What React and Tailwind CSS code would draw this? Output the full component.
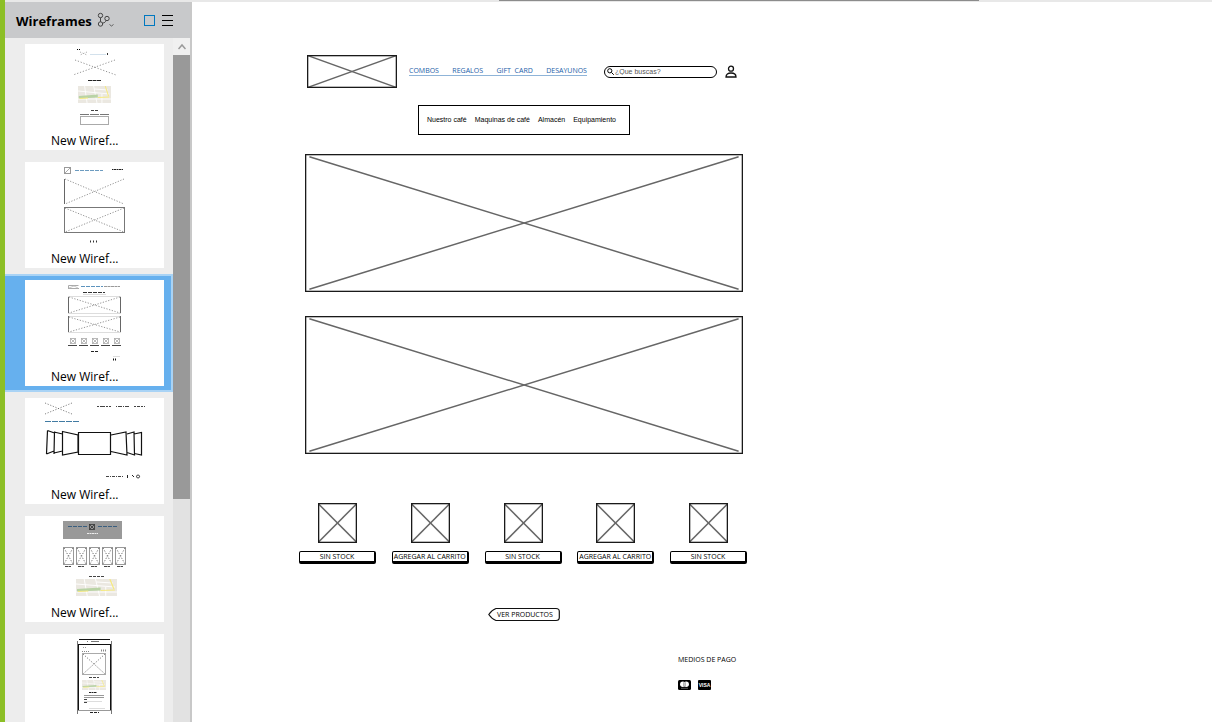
import React from "react";

function Cross({ x, y, w, h, dashed, frame, stroke = "#777" }) {
  return (
    <g stroke={stroke} strokeWidth="0.8" fill="none">
      {frame && <rect x={x} y={y} width={w} height={h} />}
      <path
        d={`M${x} ${y}L${x + w} ${y + h}M${x + w} ${y}L${x} ${y + h}`}
        strokeDasharray={dashed ? "1.2 1.6" : undefined}
      />
    </g>
  );
}

function Dash({ x, y, w, color = "#444", pattern = "3 1", size = 1 }) {
  return <path d={`M${x} ${y + 0.5}h${w}`} stroke={color} strokeWidth={size} strokeDasharray={pattern} fill="none" />;
}

function MiniMap({ x, y, w, h }) {
  return (
    <svg x={x} y={y} width={w} height={h} viewBox="0 0 40 17" preserveAspectRatio="none">
      <rect width="40" height="17" fill="#ebe8e1" />
      <path d="M8 0l3 17M19 0l4 17M29 8v9M0 5l38 3M20 3l16 1M0 13h40" stroke="#fff" strokeWidth="0.9" fill="none" />
      <path d="M1 10l23-1.500v3L1 12.500z" fill="#b9d3a5" />
      <path d="M2 12.500l10-.5M24 11.500l14-.5M33 0l4 10" stroke="#f6ea80" strokeWidth="1.2" fill="none" />
    </svg>
  );
}

function ThumbHome() {
  return (
    <>
      <Dash x={52} y={5} w={3} color="#000" pattern="1 1" />
      <Cross x={55} y={8} w={7} h={3} dashed stroke="#999" />
      <Dash x={65} y={10} w={16} color="#d3e1ec" pattern="20 0" />
      <path d="M82.500 9v2" stroke="#333" />
      <path d="M50 16l41 15M90 16L48 31" stroke="#888" strokeWidth="0.9" strokeDasharray="1.200 1.800" />
      <Dash x={63} y={36} w={13} color="#222" pattern="4 .5" />
      <MiniMap x={53} y={42} w={33} h={17} />
      <Dash x={66} y={66} w={7} />
      <Dash x={55} y={70} w={29} color="#777" pattern="9 1" />
      <rect x="55.500" y="72.500" width="28" height="8" fill="none" stroke="#aaa" />
    </>
  );
}

function ThumbBanners() {
  return (
    <>
      <rect x="39.500" y="5.500" width="6" height="6" fill="none" stroke="#999" />
      <path d="M40 11l5-5" stroke="#aaa" />
      <Dash x={50} y={8} w={28} color="#6d9cc0" pattern="4 1" />
      <Dash x={87} y={7} w={11} color="#222" pattern="1 .5 3 .5" />
      <path d="M39.500 17v25" stroke="#666" />
      <Cross x={40} y={17} w={59} h={25} dashed />
      <rect x="39.500" y="45.500" width="60" height="25" fill="none" stroke="#777" />
      <Cross x={40} y={46} w={59} h={24} dashed />
      <Dash x={65} y={79} w={9} color="#333" pattern="1 2" size={2} />
    </>
  );
}

function ThumbStore() {
  return (
    <>
      <path d="M43.500 9V5.500h10M43 8.500h11" fill="none" stroke="#aaa" />
      <path d="M44 8l5-2 4 2" fill="none" stroke="#bbb" strokeWidth="0.8" />
      <Dash x={56} y={6} w={22} color="#5c93bd" pattern="4 1" />
      <Dash x={79} y={6} w={16} color="#999" pattern="3 .5" />
      <Dash x={58} y={12} w={22} color="#333" pattern="4 1" />
      <path d="M58 14.500h23M43 16.500h53M43 33.500h53M43 36.500h53M43 52.500h53" stroke="#ddd" />
      <path d="M43.500 17v16M95.500 17v16M43.500 36v16M95.500 36v16" stroke="#666" />
      <Cross x={44} y={17} w={51} h={16} dashed />
      <Cross x={44} y={37} w={51} h={15} dashed />
      {[43, 54, 65, 76, 87].map((x) => (
        <g key={x}>
          <Cross x={x + 2.5} y={58.5} w={5} h={5} frame stroke="#aaa" />
          <Dash x={x} y={65} w={9} pattern="9 0" />
        </g>
      ))}
      <Dash x={66} y={71} w={8} color="#222" />
      <Dash x={88} y={76} w={7} color="#ddd" pattern="7 0" />
      <Dash x={88} y={79} w={4} color="#111" pattern="1 1" size={2} />
    </>
  );
}

function ThumbCarousel() {
  return (
    <>
      <Cross x={20} y={5} w={27} h={11} dashed stroke="#666" />
      <Dash x={72} y={8} w={14} pattern="2 1 5 1" />
      <Dash x={91} y={8} w={13} pattern="1 1 4 1" />
      <Dash x={109} y={8} w={11} pattern="2 1 3 1" />
      <Dash x={20} y={23} w={34} color="#417ba3" pattern="6 1" />
      <path
        d="M53.500 34.500h32v22h-32zM37.500 33.500l15.500 3.500v17l-15.500 3zM29 34l8.500 2M29 55l8.500-2M29.500 33.500L29 56M22.500 32.500l7 2.500M21.500 56l7.500-3M22.500 32.500l-1 23.500M86 37l15-3 1 23-16-3.500M102 36l7-2 .5 23-7.500-2.500M109 36l7.500-1.500V57l-7-1.500"
        stroke="#111"
        strokeWidth="1.200"
        fill="none"
      />
      <Dash x={81} y={78} w={18} pattern="3 1 1 1" />
      <path d="M102.500 77v3M107 77l2 2M113 77a1.500 1.500 0 1 0 .1 0" stroke="#222" fill="none" />
    </>
  );
}

function ThumbCatalog() {
  return (
    <>
      <rect x="38" y="5" width="59" height="18" fill="#999" />
      <Dash x={43} y={10} w={19} color="#3a5f80" pattern="4 1" />
      <Cross x={64.5} y={8.5} w={5} h={5} frame stroke="#333" />
      <Dash x={73} y={10} w={20} color="#3a5f80" pattern="4 1" />
      <Dash x={62} y={17} w={11} color="#eee" pattern="2 .5" />
      {[38, 51, 64, 77, 90].map((x) => (
        <g key={x}>
          <rect x={x + 0.5} y="31.500" width="10" height="17" fill="none" stroke="#999" />
          <Cross x={x + 1} y={32} w={9} h={16} dashed stroke="#444" />
          <Dash x={x + 2} y={50} w={6} pattern="3 .5" />
        </g>
      ))}
      <Dash x={64} y={60} w={16} />
      <MiniMap x={51} y={63} w={41} h={17} />
    </>
  );
}

function ThumbPhone() {
  return (
    <>
      <path d="M54 5.500h31M53 10.500h33" stroke="#111" />
      <path d="M52.500 7v73M86.500 7v73" stroke="#777" />
      <path d="M53.500 10v67M85.500 10v67" stroke="#111" />
      <path d="M53 76.500h33" stroke="#999" />
      <Dash x={62} y={7} w={12} color="#777" pattern="1 3 10 0" />
      <Dash x={58} y={13} w={4} color="#999" pattern="1 1" />
      <Dash x={57} y={17} w={8} color="#888" pattern="1 1" />
      <Dash x={76} y={16} w={5} color="#888" pattern="1 1" size={2} />
      <rect x="57.500" y="19.500" width="23" height="21" fill="none" stroke="#aaa" />
      <Cross x={58} y={20} w={22} h={20} dashed stroke="#555" />
      <Dash x={64} y={43} w={10} />
      <MiniMap x={57} y={46} w={24} h={10} />
      <Dash x={64} y={58} w={8} color="#222" pattern="2 .5" />
      <path d="M59 61.500h20M59 63.500h20" stroke="#999" />
      <Dash x={59} y={65} w={3} />
      <path d="M59 67.500h18M64 74.500h16" stroke="#ddd" />
      <Dash x={59} y={68} w={4} />
      <Dash x={65} y={78} w={9} color="#222" />
    </>
  );
}

const THUMBS = [
  { Drawing: ThumbHome, label: "New Wiref..." },
  { Drawing: ThumbBanners, label: "New Wiref..." },
  { Drawing: ThumbStore, label: "New Wiref...", selected: true },
  { Drawing: ThumbCarousel, label: "New Wiref..." },
  { Drawing: ThumbCatalog, label: "New Wiref..." },
  { Drawing: ThumbPhone },
];

function Sidebar() {
  return (
    <aside className="flex w-[187px] shrink-0 flex-col border-r-2 border-r-[#c8c8c8] bg-[#ededed] font-['Open_Sans',sans-serif]">
      <header className="flex h-9 shrink-0 items-center bg-[#c8c9cb] pl-[11px] pr-[17px]">
        <h1 className="pt-[3px] text-[13px] font-bold text-black">Wireframes</h1>
        <button aria-label="Branches" className="ml-[5px]">
          <svg className="h-4 w-[18px]" viewBox="0 0 18 16" fill="none" stroke="#444">
            <circle cx="3.500" cy="3.500" r="2.200" />
            <circle cx="3.500" cy="12" r="2.200" />
            <circle cx="10" cy="6.500" r="2.200" />
            <path d="M3.500 5.700v4.100M5.500 11c2 0 3-1 3.500-2.500" />
            <path d="M12.500 12.500l2 1.500 2-1.500" strokeWidth="0.8" />
          </svg>
        </button>
        <button aria-label="Thumbnail view" className="ml-auto h-[11px] w-[11px] border border-[#0078c0]" />
        <button aria-label="List view" className="ml-[7px]">
          <svg className="block h-[11px] w-[11px]" viewBox="0 0 11 11" stroke="#000">
            <path d="M0 .5h11M0 5.500h11M0 10.500h11" />
          </svg>
        </button>
      </header>
      <div className="flex min-h-0 flex-1">
        <ul className="min-w-0 flex-1 overflow-hidden">
          {THUMBS.map(({ Drawing, label, selected }, i) => (
            <li
              key={i}
              className={
                selected
                  ? "h-[118px] border-y-2 border-r-2 border-[#a9d3f5] bg-[#66b0ee] py-1 pl-5 pr-[7px]"
                  : "h-[118px] py-[6px] pl-5 pr-[9px]"
              }
            >
              <button
                aria-label={label ? undefined : "Wireframe"}
                className="flex h-[106px] w-full flex-col justify-start bg-white text-left"
              >
                <svg className="h-[86px] w-full shrink-0" viewBox="0 0 139 86">
                  <Drawing />
                </svg>
                {label && <span className="pl-[26px] pt-px text-[12px] leading-5 text-black">{label}</span>}
              </button>
            </li>
          ))}
        </ul>
        <div className="flex w-[17px] flex-col bg-[#e2e2e2]">
          <button aria-label="Scroll up" className="flex h-[17px] items-center justify-center bg-[#f0f0f0]">
            <svg className="h-2 w-2" viewBox="0 0 8 8" fill="none" stroke="#999" strokeWidth="1.500">
              <path d="M.5 6L4 2l3.500 4" />
            </svg>
          </button>
          <div className="h-[444px] bg-[#999]" />
        </div>
      </div>
    </aside>
  );
}

function ImageBox({ className }) {
  return (
    <svg className={`block ${className}`} role="img" aria-label="Imagen">
      <g stroke="#666" strokeWidth="1.500">
        <line x1="1%" y1="2%" x2="99%" y2="98%" />
        <line x1="99%" y1="2%" x2="1%" y2="98%" />
      </g>
      <rect x="0" y="0" width="100%" height="100%" fill="none" stroke="#1a1a1a" strokeWidth="2.600" />
    </svg>
  );
}

const LINKS = ["COMBOS", "REGALOS", "GIFT  CARD", "DESAYUNOS"];
const MENU = ["Nuestro café", "Maquinas de café", "Almacén", "Equipamiento"];
const PRODUCTS = ["SIN STOCK", "AGREGAR AL CARRITO", "SIN STOCK", "AGREGAR AL CARRITO", "SIN STOCK"];

function Wireframe() {
  return (
    <div className="w-[448px] pt-[53px] font-['Open_Sans',sans-serif] text-[7px] leading-[10px] text-black">
      <div className="flex items-center pl-2">
        <ImageBox className="h-[33px] w-[90px]" />
        <nav className="ml-3 flex w-[178px] justify-between border-b border-[#8fb4d8] leading-[8px] text-[#1a5ea8]">
          {LINKS.map((l) => (
            <a key={l} href="#" className="whitespace-pre">{l}</a>
          ))}
        </nav>
        <label className="ml-[17px] flex h-3 w-[113px] items-center rounded-full border border-black pl-[2px]">
          <svg className="h-[7px] w-[7px] shrink-0" viewBox="0 0 7 7" fill="none" stroke="#000">
            <circle cx="2.800" cy="2.800" r="2.100" />
            <path d="M4.500 4.500L6.800 6.800" />
          </svg>
          <input
            aria-label="Buscar"
            placeholder="¿Que buscas?"
            className="ml-px h-[10px] w-full min-w-0 bg-transparent pb-px font-['Liberation_Sans',sans-serif] text-[7px] leading-[9px] outline-none placeholder:text-[#555]"
          />
        </label>
        <button aria-label="Cuenta" className="ml-2">
          <svg className="h-[13px] w-3" viewBox="0 0 12 13" fill="none" stroke="#111" strokeWidth="1.300">
            <circle cx="6" cy="3.700" r="2.500" />
            <path d="M1 12c0-2.800 2-4 5-4s5 1.200 5 4z" />
          </svg>
        </button>
      </div>

      <nav className="ml-[119px] mt-[17px] flex h-[30px] w-[212px] items-center gap-2 border border-black pl-2 pr-[13px] font-['Liberation_Sans',sans-serif]">
        {MENU.map((m) => (
          <a key={m} href="#" className="first:mr-auto">{m}</a>
        ))}
      </nav>

      <div className="ml-[6px] mt-[19px] flex flex-col gap-6">
        <ImageBox className="h-[138px] w-[438px]" />
        <ImageBox className="h-[138px] w-[438px]" />
      </div>

      <ul className="mt-[49px] flex justify-between">
        {PRODUCTS.map((p, i) => (
          <li key={i} className="flex w-[77px] flex-col items-center gap-2">
            <ImageBox className="h-10 w-[39px]" />
            <button className="h-[13px] w-full whitespace-nowrap rounded-[2px] border border-b-[3px] border-r-2 border-black text-center leading-[10px]">
              {p}
            </button>
          </li>
        ))}
      </ul>

      <button className="relative ml-[189px] mt-[43px] block h-[15px] w-[72px] pl-[9px] text-left">
        <svg className="absolute inset-0 h-full w-full" viewBox="0 0 72 15" fill="none" stroke="#111" strokeWidth="1.200">
          <path d="M8 1.500h60c2 0 3.300 1 3.300 3v6c0 2-1.300 3-3.300 3H8C5 12.500 2.500 10 .8 7.500 2.500 5 5 2.500 8 1.500z" />
        </svg>
        <span className="relative block whitespace-nowrap leading-[14px]">VER PRODUCTOS</span>
      </button>

      <section className="ml-[379px] mt-[33px]">
        <h2 className="whitespace-nowrap">MEDIOS DE PAGO</h2>
        <div className="mt-[15px] flex gap-[7px]">
          <svg className="h-[10px] w-[13px]" viewBox="0 0 13 10" role="img" aria-label="Mastercard">
            <rect width="13" height="10" rx="1.500" fill="#000" />
            <circle cx="4.800" cy="4.300" r="2.700" fill="#fff" />
            <circle cx="8.200" cy="4.300" r="2.700" fill="#fff" />
            <path d="M5.800 2.200v4.200M7.200 2.200v4.200" stroke="#000" strokeWidth="0.400" />
            <path d="M3 8.300h7" stroke="#999" strokeWidth="0.600" />
          </svg>
          <span className="flex h-[10px] w-[13px] items-center justify-center rounded-[1px] bg-black font-['Liberation_Sans',sans-serif] text-[5px] font-bold leading-[10px] text-white">
            VISA
          </span>
        </div>
      </section>
    </div>
  );
}

export default function App() {
  return (
    <div className="flex h-screen flex-col overflow-hidden border-l-[5px] border-[#8cbf26] bg-white">
      <div className="flex h-[2px] shrink-0 items-start bg-[#e8e8e8]">
        <div className="ml-[40.9%] h-px w-[39.8%] bg-[#8c8c8c]" />
      </div>
      <div className="flex min-h-0 flex-1">
        <Sidebar />
        <main className="min-w-0 flex-1 overflow-hidden bg-white pl-[107px]">
          <Wireframe />
        </main>
      </div>
    </div>
  );
}
